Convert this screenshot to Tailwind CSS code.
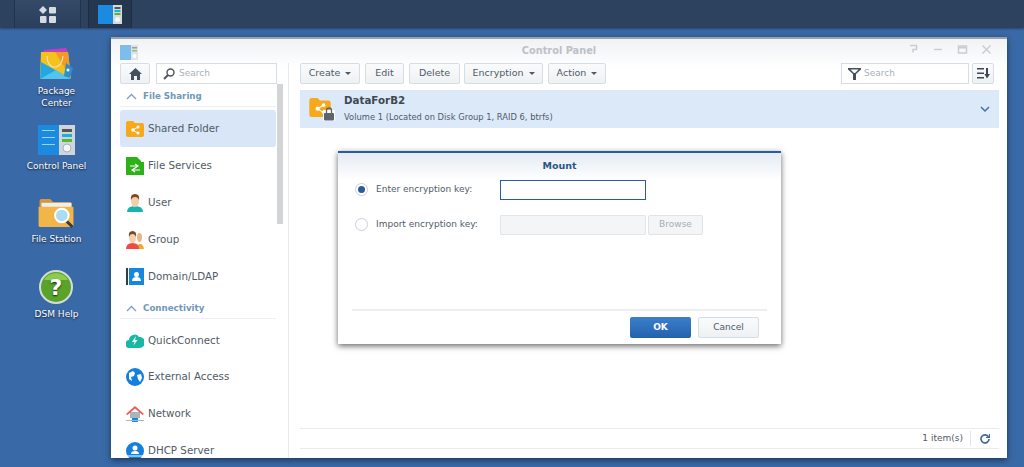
<!doctype html>
<html lang="en">
<head>
<meta charset="utf-8">
<script src="https://cdn.jsdelivr.net/npm/@tailwindcss/browser@4"></script>
<title>Control Panel</title>
</head>
<body class="m-0 overflow-hidden">
<div class="relative w-[1024px] h-[467px] overflow-hidden bg-[#3a69a7] font-['DejaVu_Sans',sans-serif]">

  <!-- taskbar -->
  <header class="flex items-stretch h-[28px] bg-[#2c425f] shadow-[0_1px_2px_rgba(0,0,0,0.35)]">
    <div class="w-[15px] border-r border-[#22344c]"></div>
    <div class="w-[66px] flex items-center justify-center bg-gradient-to-b from-[#354a66] to-[#2a3f5b] border-r border-[#22344c]">
      <svg width="17" height="17" viewBox="0 0 17 17" fill="#d6dbe1"><path d="M4 0l4 4-4 4-4-4z"/><rect x="10" y="1" width="7" height="6.500" rx="1"/><rect x="1" y="10" width="6.500" height="7" rx="1"/><rect x="10" y="10" width="7" height="7" rx="1"/></svg>
    </div>
    <div class="w-[7px]"></div>
    <div class="w-[44px] flex items-center justify-center bg-[#25374f] border-x border-[#1e2d42]">
      <svg width="24" height="19" viewBox="0 0 24 19"><rect width="15" height="19" fill="#1a8be0"/><rect x="15" width="9" height="19" fill="#d5dadd"/><rect x="16.500" y="2" width="6" height="2" fill="#555"/><rect x="16.500" y="5" width="6" height="2" fill="#17b3dc"/><rect x="16.500" y="8" width="6" height="2" fill="#5cb531"/><circle cx="19.500" cy="14.500" r="2.500" fill="#f4f6f7"/></svg>
    </div>
  </header>

  <!-- desktop icons -->
  <nav class="absolute left-0 top-[48px] w-[113px] flex flex-col items-center text-white text-[9px] leading-[12px] text-center [text-shadow:0_1px_2px_rgba(0,0,0,0.8)]">
    <div class="h-[77px] flex flex-col items-center">
      <svg width="36" height="34" viewBox="0 0 36 34"><path d="M5 2l22-2 2 5H4z" fill="#c23fc4"/><path d="M2 4h27l3 26H1z" fill="#f5c21c"/><path d="M16 4h13l3 26z" fill="#f39a26"/><path d="M1 31L2 14l30 17z" fill="#22a7e0"/><path d="M32 31L17 22 1 31z" fill="#52c4ee"/><path d="M8 8c0 15 15 15 16 0" fill="none" stroke="#e9e3c7" stroke-width="1.200"/><path d="M27 15l7 5-3 10-6-2z" fill="#2b8fcf"/><circle cx="29" cy="22" r="1.500" fill="#fff"/></svg>
      <div class="mt-[3px] w-[70px]">Package Center</div>
    </div>
    <div class="h-[73px] flex flex-col items-center">
      <svg width="37" height="30" viewBox="0 0 37 30"><rect width="21" height="30" fill="#1a8be0"/><rect x="21" width="16" height="30" fill="#cfd5d9"/><rect x="4" y="5" width="13" height="1" fill="#9fd3f7"/><rect x="4" y="12" width="13" height="1" fill="#9fd3f7"/><rect x="4" y="19" width="13" height="1" fill="#9fd3f7"/><rect x="24" y="4" width="10" height="3" fill="#555"/><rect x="24" y="9" width="10" height="3" fill="#17b3dc"/><rect x="24" y="14" width="10" height="3" fill="#5cb531"/><circle cx="29" cy="23" r="4" fill="#f3f6f8" stroke="#aab3b9"/></svg>
      <div class="mt-[5px] whitespace-nowrap">Control Panel</div>
    </div>
    <div class="h-[72px] flex flex-col items-center">
      <svg width="37" height="31" viewBox="0 0 37 32"><path d="M1 3q0-2 2-2h9l3 3h17q2 0 2 2v3H1z" fill="#d6993a"/><rect x="3" y="5" width="31" height="5" fill="#eeeeee"/><path d="M0 9h35q1 0 1 1v18q0 2-2 2H2q-2 0-2-2z" fill="#f2b648"/><path d="M29 24l6 6" stroke="#3b3b3b" stroke-width="3"/><circle cx="24" cy="18" r="7" fill="#a9ddf4" stroke="#fff" stroke-width="2"/></svg>
      <div class="mt-[4px] whitespace-nowrap">File Station</div>
    </div>
    <div class="h-[74px] flex flex-col items-center">
      <svg width="34" height="34" viewBox="0 0 34 34"><circle cx="17" cy="17" r="16" fill="#5aa32b" stroke="#d6dcd4" stroke-width="2"/><path d="M17 3a14 11 0 0 1 12 7H5a14 11 0 0 1 12-7z" fill="#8ccb50"/><text x="17" y="25" text-anchor="middle" font-size="22" font-weight="700" fill="#fff" font-family="DejaVu Sans">?</text></svg>
      <div class="mt-[4px] whitespace-nowrap">DSM Help</div>
    </div>
  </nav>

  <!-- control panel window -->
  <section class="absolute left-[111px] top-[37px] w-[896px] h-[421px] bg-white border-t-[2px] border-[#9aa3ad] shadow-[0_2px_6px_rgba(0,0,0,0.5)] flex flex-col overflow-hidden">
    <div class="absolute inset-x-0 top-0 h-[30px] bg-gradient-to-b from-[#f0f2f4] to-white"></div>

    <!-- title bar -->
    <div class="relative h-[24px] shrink-0 flex items-center">
      <svg class="ml-[9px] mt-[2px] opacity-70" width="18" height="15" viewBox="0 0 18 15"><rect width="11" height="15" fill="#4aa5e8"/><rect x="11" width="7" height="15" fill="#d6dbde"/><rect x="12" y="2" width="5" height="1.500" fill="#777"/><rect x="12" y="5" width="5" height="1.500" fill="#5cb531"/><circle cx="14.500" cy="11" r="2" fill="#fff"/></svg>
      <div class="absolute inset-x-0 top-[5px] text-center text-[9.800px] leading-[14px] font-bold text-[#bcc1c6]">Control Panel</div>
      <div class="absolute right-[15px] top-[5px] flex items-center gap-[13px] text-[#c9ced3]">
        <svg width="11" height="11" viewBox="0 0 11 11" fill="none" stroke="currentColor" stroke-width="1.500"><path d="M2 1.500h6.500v4H5v3"/></svg>
        <svg width="12" height="11" viewBox="0 0 12 11" fill="none" stroke="currentColor" stroke-width="1.500"><path d="M2 5.500h8"/></svg>
        <svg width="11" height="11" viewBox="0 0 11 11" fill="none" stroke="currentColor" stroke-width="1.500"><rect x="1.500" y="2" width="8" height="7"/><path d="M1.500 3.500h8" stroke-width="2"/></svg>
        <svg width="11" height="11" viewBox="0 0 11 11" fill="none" stroke="currentColor" stroke-width="1.500"><path d="M1.500 1.500l8 8M9.500 1.500l-8 8"/></svg>
      </div>
    </div>

    <div class="relative flex-1 flex min-h-0">
      <!-- sidebar -->
      <aside class="relative w-[178px] shrink-0 border-r border-[#e7eaed] pl-[9px] overflow-hidden text-[10.300px] text-[#4f5a66]">
        <div class="flex gap-[6px] h-[21px]">
          <div class="w-[30px] rounded-[2px] border border-[#d5dde6] bg-gradient-to-b from-[#fafbfc] to-[#eef1f4] flex items-center justify-center">
            <svg width="13" height="12" viewBox="0 0 13 12" fill="#46505c"><path d="M6.500 0L13 6h-2v6H8V8H5v4H2V6H0z"/></svg>
          </div>
          <div class="w-[121px] border border-[#d5dde6] flex items-center pl-[6px] gap-[4px] text-[9px] text-[#a9b0b8]">
            <svg width="12" height="12" viewBox="0 0 12 12" fill="none" stroke="#4c5560" stroke-width="1.400"><circle cx="7.500" cy="4.500" r="3.500"/><path d="M5 7l-4 4" stroke-width="2"/></svg>
            Search
          </div>
        </div>

        <div class="w-[156px] mt-[3px] h-[20px] border-b border-[#edf0f3] flex items-center gap-[6px] pl-[6px] text-[8.700px] font-bold text-[#6f97ba]">
          <svg width="11" height="7" viewBox="0 0 11 7" fill="none" stroke="#7f9fbd" stroke-width="1.300"><path d="M1 6l4.500-4.500L10 6"/></svg>
          File Sharing
        </div>
        <ul class="w-[156px] mt-[3px]">
          <li class="h-[37px] flex items-center gap-[4px] pl-[6px] rounded-[3px] bg-[#d8e6f7]">
            <svg width="18" height="16" viewBox="0 0 18 16"><path d="M0 2q0-2 2-2h5l2 2h7q2 0 2 2v10q0 2-2 2H2q-2 0-2-2z" fill="#f7a81b"/><g fill="#fff"><circle cx="7" cy="9" r="1.800"/><circle cx="12" cy="6" r="1.500"/><circle cx="12" cy="12" r="1.500"/><path d="M7 8.500l5-3 .4.800-5 3zM7 8.700l5 3-.4.800-5-3z"/></g></svg>
            Shared Folder
          </li>
          <li class="h-[37px] flex items-center gap-[4px] pl-[6px]">
            <svg width="18" height="18" viewBox="0 0 18 18"><path d="M0 0h11l4 4v1h3v13H0z" fill="#2cb117"/><path d="M4 9h8M9 7l3 2-3 2M14 13H6M9 11l-3 2 3 2" stroke="#fff" stroke-width="1.200" fill="none"/></svg>
            File Services
          </li>
          <li class="h-[37px] flex items-center gap-[4px] pl-[6px]">
            <svg width="18" height="18" viewBox="0 0 18 18"><path d="M1 18q0-6 8-6t8 6z" fill="#18b3ae"/><path d="M5 6q0-6 4-6t4 6q0 7-4 7t-4-7z" fill="#f4cda9"/><path d="M5 6q-1-6 4-6t4 6q-1-3-4-3t-4 3z" fill="#7a4a25"/></svg>
            User
          </li>
          <li class="h-[37px] flex items-center gap-[4px] pl-[6px]">
            <svg width="18" height="18" viewBox="0 0 18 18"><path d="M11 18q0-5 3-5t4 5z" fill="#f5a623"/><path d="M11 6q0-4 2.500-4T16 6q0 5-2.500 5T11 6z" fill="#e8b68d"/><path d="M0 18q0-6 6.500-6t6.500 6z" fill="#ef4b43"/><path d="M3 6q0-5 3.500-5T10 6q0 6-3.500 6T3 6z" fill="#f6d0ad"/><path d="M3 6q-1-6 3.500-6T10 6q-1-3-3.500-3T3 6z" fill="#7a4a25"/></svg>
            Group
          </li>
          <li class="h-[37px] flex items-center gap-[4px] pl-[6px]">
            <svg width="18" height="18" viewBox="0 0 18 18"><rect width="2" height="17" fill="#2f3c4c"/><rect x="3" width="15" height="17" fill="#1487df"/><circle cx="10.500" cy="6.500" r="2.500" fill="#fff"/><path d="M6 13q0-4 4.500-4t4.500 4z" fill="#fff"/></svg>
            Domain/LDAP
          </li>
        </ul>

        <div class="w-[156px] mt-[4px] h-[20px] border-b border-[#edf0f3] flex items-center gap-[6px] pl-[6px] text-[8.700px] font-bold text-[#6f97ba]">
          <svg width="11" height="7" viewBox="0 0 11 7" fill="none" stroke="#7f9fbd" stroke-width="1.300"><path d="M1 6l4.500-4.500L10 6"/></svg>
          Connectivity
        </div>
        <ul class="w-[156px] mt-[3px]">
          <li class="h-[37px] flex items-center gap-[4px] pl-[6px]">
            <svg width="18" height="15" viewBox="0 0 18 15"><path d="M4 15a4 4 0 0 1-1-8 5.500 5.500 0 0 1 10-3 5 5 0 0 1 1 11z" fill="#17b9a5"/><path d="M10 3L6 9h2.500L7.500 12.500 11.500 7H9z" fill="#fff"/></svg>
            QuickConnect
          </li>
          <li class="h-[36px] flex items-center gap-[4px] pl-[6px]">
            <svg width="18" height="18" viewBox="0 0 18 18"><circle cx="9" cy="9" r="9" fill="#1380de"/><path d="M3 5l4-2 2 2-1 3-3 1 1 4-3-2zM11 7l4-1 1 4-2 4-2-3z" fill="#fff"/></svg>
            External Access
          </li>
          <li class="h-[37px] flex items-center gap-[4px] pl-[6px]">
            <svg width="18" height="18" viewBox="0 0 18 18"><rect x="4" y="7" width="10" height="6" fill="#aab4be"/><path d="M0 9l9-8 9 8-1.500 1L9 3.500 1.500 10z" fill="#ef5a52"/><rect x="6" y="13" width="6" height="4" fill="#1487df"/><path d="M0 15.500h18" stroke="#aab4be"/></svg>
            Network
          </li>
          <li class="h-[37px] flex items-center gap-[4px] pl-[6px]">
            <svg width="18" height="18" viewBox="0 0 18 18"><circle cx="9" cy="9" r="9" fill="#1380de"/><circle cx="9" cy="6" r="2.500" fill="#fff"/><path d="M5 12q0-3 4-3t4 3z" fill="#fff"/><path d="M1 14h16" stroke="#fff"/></svg>
            DHCP Server
          </li>
        </ul>
        <div class="absolute left-[166px] top-[21px] w-[6px] h-[140px] bg-[#d3d4d5]"></div>
      </aside>

      <!-- main -->
      <main class="relative flex-1 min-w-0 flex flex-col pl-[11px] pr-[8px] text-[#4f5a66]">
        <div class="flex h-[21px] gap-[5px] text-[9.500px]">
          <button class="w-[60px] rounded-[2px] border border-[#d5dde6] bg-gradient-to-b from-[#fafbfc] to-[#eef1f4] flex items-center justify-center gap-[5px]">Create <span class="border-x-[3px] border-t-[3px] border-x-transparent border-t-[#4f5a66]"></span></button>
          <button class="w-[39px] rounded-[2px] border border-[#d5dde6] bg-gradient-to-b from-[#fafbfc] to-[#eef1f4]">Edit</button>
          <button class="w-[51px] rounded-[2px] border border-[#d5dde6] bg-gradient-to-b from-[#fafbfc] to-[#eef1f4]">Delete</button>
          <button class="w-[79px] -ml-[1px] rounded-[2px] border border-[#d5dde6] bg-gradient-to-b from-[#fafbfc] to-[#eef1f4] flex items-center justify-center gap-[5px]">Encryption <span class="border-x-[3px] border-t-[3px] border-x-transparent border-t-[#4f5a66]"></span></button>
          <button class="w-[58px] rounded-[2px] border border-[#d5dde6] bg-gradient-to-b from-[#fafbfc] to-[#eef1f4] flex items-center justify-center gap-[5px]">Action <span class="border-x-[3px] border-t-[3px] border-x-transparent border-t-[#4f5a66]"></span></button>
          <div class="ml-auto w-[128px] border border-[#d5dde6] flex items-center pl-[6px] gap-[3px] text-[9px] text-[#a9b0b8]">
            <svg width="13" height="13" viewBox="0 0 13 13" fill="#46505c"><path d="M0 1h13v1.500L8 7v6H5V7L0 2.500zM2.500 2.500L6 6h1l3.500-3.500z" fill-rule="evenodd"/></svg>
            Search
          </div>
          <button class="w-[22px] -ml-[2px] mr-[5px] rounded-[2px] border border-[#d5dde6] bg-gradient-to-b from-[#fafbfc] to-[#eef1f4] flex items-center justify-center">
            <svg width="13" height="11" viewBox="0 0 13 11" fill="#3c4652"><rect y="0" width="7" height="1.500"/><rect y="4.500" width="7" height="1.500"/><rect y="9" width="7" height="1.500"/><path d="M9 0h2v6h2l-3 4.500L7.500 6H9z"/></svg>
          </button>
        </div>

        <div class="mt-[6px] h-[38px] bg-[#dce9f9] flex items-center pl-[9px] pr-[9px]">
          <div class="relative w-[25px] h-[22px] mr-[10px] shrink-0">
            <svg width="22" height="19" viewBox="0 0 18 16"><path d="M0 2q0-2 2-2h5l2 2h7q2 0 2 2v10q0 2-2 2H2q-2 0-2-2z" fill="#f7a81b"/><g fill="#fff"><circle cx="7" cy="9" r="1.800"/><circle cx="12" cy="6" r="1.500"/><circle cx="12" cy="12" r="1.500"/><path d="M7 8.500l5-3 .4.800-5 3zM7 8.700l5 3-.4.800-5-3z"/></g></svg>
            <svg class="absolute left-[14px] top-[9px]" width="12" height="14" viewBox="0 0 12 14"><rect x="0" y="3" width="12" height="11" rx="1" fill="#fff"/><rect x="1" y="6" width="10" height="7.500" rx="1" fill="#5c6670"/><path d="M3.500 6V3.500a2.500 2.500 0 0 1 5 0V6" fill="none" stroke="#5c6670" stroke-width="1.300"/></svg>
          </div>
          <div class="flex-1 pb-[2px]">
            <div class="text-[10.300px] leading-[14px] font-bold text-[#3e4853]">DataForB2</div>
            <div class="mt-[5px] text-[8.350px] leading-[11px] text-[#4f5a66]">Volume 1 (Located on Disk Group 1, RAID 6, btrfs)</div>
          </div>
          <svg width="10" height="7" viewBox="0 0 10 7" fill="none" stroke="#3f70a8" stroke-width="1.500"><path d="M1 1l4 4 4-4"/></svg>
        </div>

        <div class="flex-1"></div>
        <footer class="h-[21px] mb-[9px] border-y border-[#e8ecf0] flex items-center justify-end text-[9px]">
          <span class="pr-[7px]">1 item(s)</span>
          <span class="w-px h-[15px] bg-[#e1e5e9]"></span>
          <svg class="ml-[9px] mr-[9px]" width="10" height="10" viewBox="0 0 10 10" fill="none" stroke="#3f6a9c" stroke-width="1.700"><path d="M8.500 3a4 4 0 1 0 .500 2"/><path d="M9.500 0v3.500H6" stroke-width="1.200"/></svg>
        </footer>
      </main>
    </div>
  </section>

  <!-- mount dialog -->
  <div class="absolute left-[338px] top-[151px] w-[443px] h-[193px] bg-white border-t-[2px] border-[#2a5c9c] shadow-[0_2px_6px_rgba(0,0,0,0.6)] flex flex-col text-[9px] text-[#4f5a66]">
    <div class="h-[27px] bg-gradient-to-b from-[#e4ebf3] to-white text-center font-bold text-[9.500px] leading-[26px] text-[#2b5488]">Mount</div>
    <div class="h-[21px] mt-[-1px] pl-[17px] flex items-center">
      <span class="w-[13px] h-[13px] rounded-full border border-[#c8d0da] flex items-center justify-center"><span class="w-[7px] h-[7px] rounded-full bg-[#2a5c9c]"></span></span>
      <span class="ml-[8px] w-[124px]">Enter encryption key:</span>
      <span class="w-[146px] h-[20px] border border-[#2a5c9c] bg-white"></span>
    </div>
    <div class="h-[21px] mt-[14px] pl-[17px] flex items-center">
      <span class="w-[13px] h-[13px] rounded-full border border-[#c8d0da]"></span>
      <span class="ml-[8px] w-[124px]">Import encryption key:</span>
      <span class="w-[146px] h-[20px] rounded-[1px] border border-[#e1e6ea] bg-[#f3f5f7]"></span>
      <span class="ml-[2px] w-[55px] h-[20px] rounded-[2px] border border-[#dfe4e9] bg-[#f3f5f7] text-[#a7adb4] flex items-center justify-center">Browse</span>
    </div>
    <div class="mx-[14px] mt-[74px] border-t-[2px] border-[#eceef0] flex justify-end gap-[7px] pt-[6px] pr-[8px]">
      <button class="w-[61px] h-[21px] rounded-[2px] bg-gradient-to-b from-[#3b7fcc] to-[#2461ad] text-white font-bold">OK</button>
      <button class="w-[61px] h-[21px] rounded-[2px] border border-[#d5dde6] bg-gradient-to-b from-[#fafbfc] to-[#eef1f4]">Cancel</button>
    </div>
  </div>
</div>
</body>
</html>
